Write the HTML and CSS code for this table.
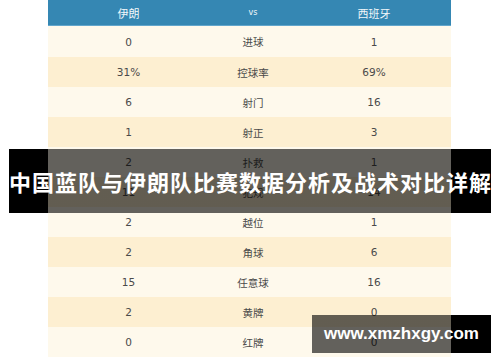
FILE: index.html
```
<!DOCTYPE html>
<html lang="zh-CN">
<head>
  <meta charset="UTF-8" />
  <meta name="viewport" content="width=device-width, initial-scale=1.0"/>
  <title>中国蓝队与伊朗队比赛数据分析及战术对比详解</title>
  <link rel="stylesheet" href="styles.css">
</head>
<body>
  <div class="pagina">
    <table class="tabela">
      <thead>
        <tr>
          <th class="col-a">伊朗</th>
          <th class="col-m vs">vs</th>
          <th class="col-b">西班牙</th>
        </tr>
      </thead>
      <tbody>
        <tr><td>0</td><td>进球</td><td>1</td></tr>
        <tr><td>31%</td><td>控球率</td><td>69%</td></tr>
        <tr><td>6</td><td>射门</td><td>16</td></tr>
        <tr><td>1</td><td>射正</td><td>3</td></tr>
        <tr><td>2</td><td>扑救</td><td>1</td></tr>
        <tr><td>11</td><td>犯规</td><td>14</td></tr>
        <tr><td>2</td><td>越位</td><td>1</td></tr>
        <tr><td>2</td><td>角球</td><td>6</td></tr>
        <tr><td>15</td><td>任意球</td><td>16</td></tr>
        <tr><td>2</td><td>黄牌</td><td>0</td></tr>
        <tr><td>0</td><td>红牌</td><td>0</td></tr>
      </tbody>
    </table>

    <div class="titulo">中国蓝队与伊朗队比赛数据分析及战术对比详解</div>
    <div class="marca">www.xmzhxgy.com</div>
  </div>
</body>
</html>
```

FILE: styles.css
```
body {
  margin: 0;
  background-color: #ffffff;
  font-family: "DejaVu Sans", "Noto Sans CJK SC", sans-serif;
}

.pagina {
  position: relative;
  width: 500px;
  height: 362px;
  overflow: hidden;
}

.tabela {
  margin-left: 48px;
  width: 403px;
  border-collapse: collapse;
  font-size: 10.5px;
  color: #4a4a4a;
  text-align: center;
}

.tabela th {
  height: 25px;
  padding: 0;
  background-color: #3587b3;
  border-bottom: 1px solid #62a6cc;
  color: #f2f7fa;
  font-weight: normal;
  font-size: 11px;
  font-family: "Noto Sans CJK SC", sans-serif;
}

.tabela th.vs {
  font-size: 8px;
  font-family: "DejaVu Sans", sans-serif;
}

.col-a { width: 161px; }
.col-m { width: 88px; }
.col-b { width: 154px; }

.tabela td {
  height: 30px;
  padding: 0;
}

.tabela tbody tr:nth-child(odd) {
  background-color: #fef9ec;
}

.tabela tbody tr:nth-child(even) {
  background-color: #fdefd1;
}

.tabela tbody tr:first-child td {
  height: 31px;
}

/* faixas por cima da tabela */
.titulo, .marca {
  position: absolute;
  color: #ffffff;
  font-weight: bold;
  white-space: nowrap;
}

.titulo {
  left: 9px;
  top: 149px;
  width: 482px;
  height: 64px;
  line-height: 64px;
  text-align: center;
  font-size: 22px;
  letter-spacing: 1px;
  font-family: "Noto Sans CJK SC", sans-serif;
  background: linear-gradient(to right, #000 39px, rgba(0,0,0,0.61) 39px, rgba(0,0,0,0.61) 442px, #000 442px);
}

.marca {
  left: 312px;
  top: 315px;
  width: 179px;
  height: 38px;
  line-height: 38px;
  text-align: center;
  font-size: 17px;
  font-family: "Liberation Sans", Arial, sans-serif;
  background: linear-gradient(to right, rgba(0,0,0,0.61) 139px, #000 139px);
}
```
